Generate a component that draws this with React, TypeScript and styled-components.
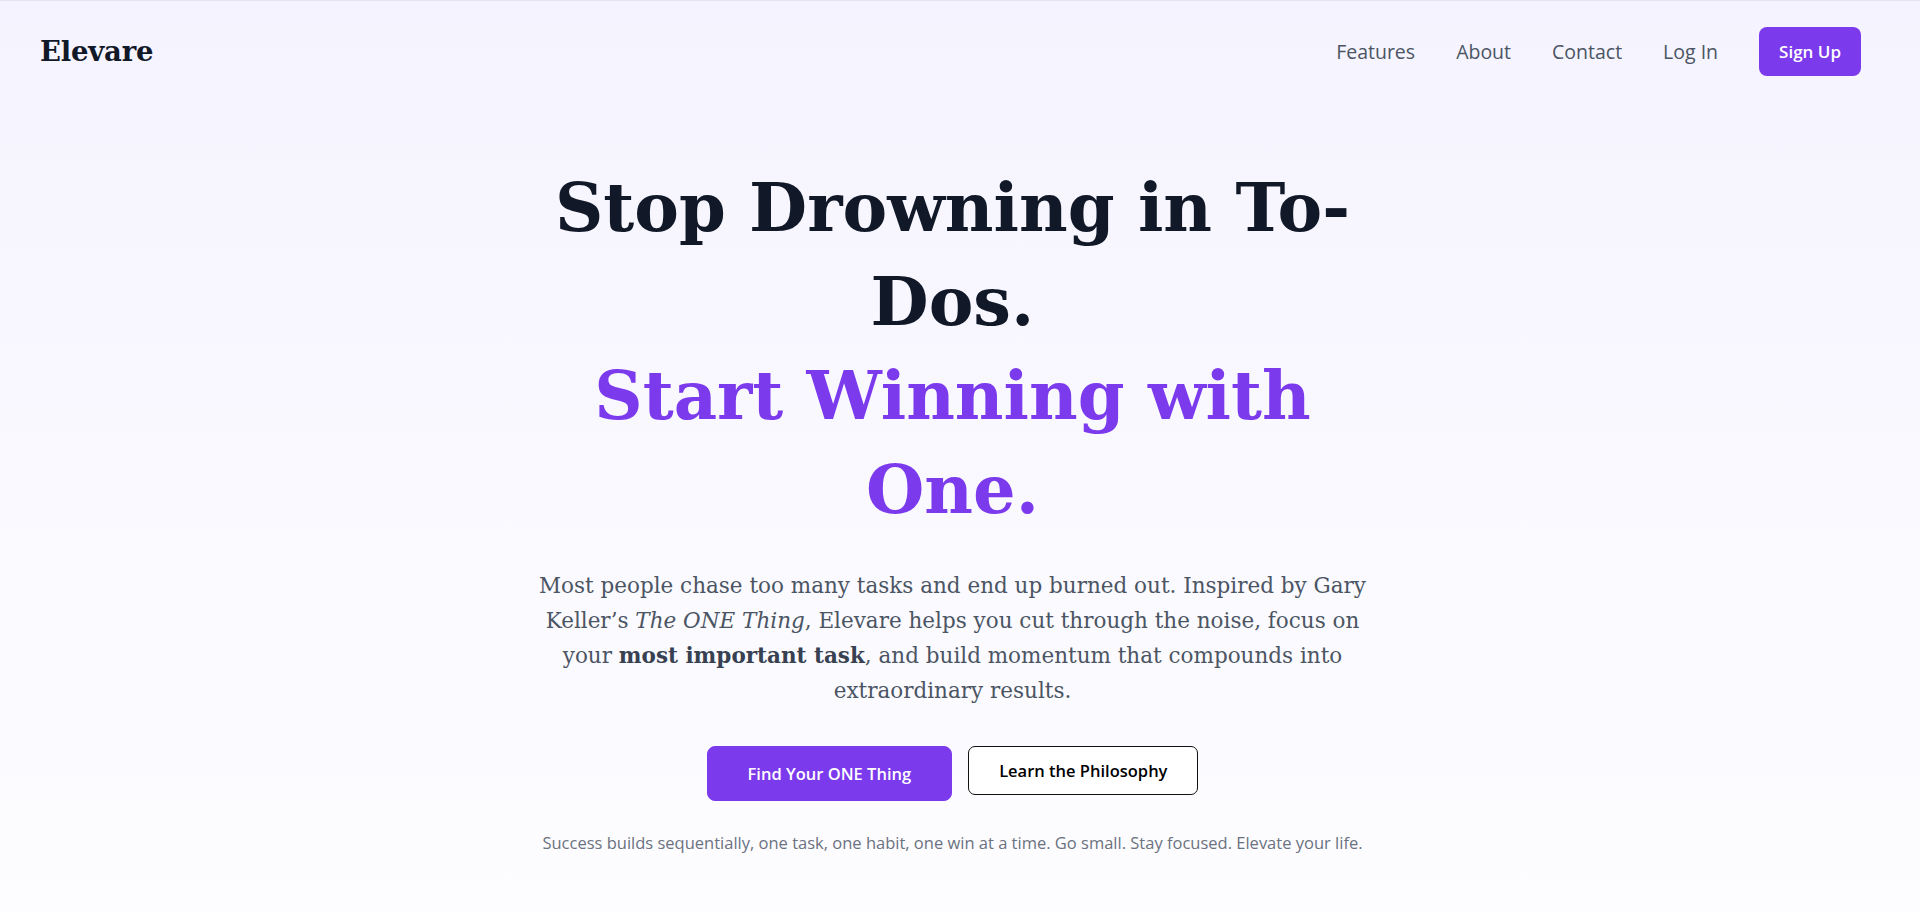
import React from "react";
import styled, { createGlobalStyle } from "styled-components";

const GlobalStyle = createGlobalStyle`
  html, body {
    margin: 0;
    padding: 0;
  }
  body {
    background: #ffffff;
    font-family: "Open Sans", "Noto Sans", sans-serif;
    color: #111827;
  }
  *, *::before, *::after {
    box-sizing: border-box;
  }
`;

/* padding-right reserves the 15px gutter the reference's scrollbar occupies */
const Page = styled.div`
  padding-right: 15px;
  border-top: 1px solid #e8e2f0;
  background: linear-gradient(to bottom, #f5f3ff 0px, #f7f6ff 200px, #ffffff 1150px, #ffffff 100%);
`;

const Header = styled.header`
  display: flex;
  align-items: center;
  justify-content: space-between;
  height: 100px;
  padding: 0 44px 0 40px;
`;

const Logo = styled.a`
  font-family: "DejaVu Serif", Georgia, serif;
  font-weight: 700;
  font-size: 27.5px;
  color: #111827;
  text-decoration: none;
  letter-spacing: -0.2px;
`;

const Nav = styled.nav`
  display: flex;
  align-items: center;
  gap: 41px;
`;

const NavLink = styled.a`
  font-size: 19.5px;
  color: #4b5563;
  text-decoration: none;
`;

const SignUp = styled.a`
  display: inline-flex;
  align-items: center;
  justify-content: center;
  height: 49px;
  padding: 0 20px;
  border-radius: 8px;
  background: #7c3aed;
  color: #ffffff;
  font-size: 17px;
  font-weight: 600;
  text-decoration: none;
`;

const Hero = styled.section`
  display: flex;
  flex-direction: column;
  align-items: center;
  padding: 60px 24px 0;
  text-align: center;
`;

const Title = styled.h1`
  margin: 0;
  max-width: 860px;
  font-family: "DejaVu Serif", Georgia, serif;
  font-weight: 700;
  font-size: 67px;
  line-height: 94px;
  color: #111827;
`;

const Accent = styled.span`
  display: block;
  color: #7c3aed;
`;

const Lead = styled.p`
  margin: 31px 0 0;
  max-width: 850px;
  font-family: "DejaVu Serif", Georgia, serif;
  font-size: 21.5px;
  line-height: 35px;
  color: #4b5563;

  em {
    font-style: italic;
  }
  strong {
    font-weight: 700;
    color: #374151;
  }
`;

const Actions = styled.div`
  display: flex;
  align-items: flex-start;
  gap: 16px;
  margin-top: 38px;
`;

const Button = styled.a<{ $primary?: boolean }>`
  display: inline-flex;
  align-items: center;
  justify-content: center;
  height: ${(p) => (p.$primary ? "55px" : "49px")};
  padding: 0 ${(p) => (p.$primary ? "40px" : "30px")};
  border-radius: ${(p) => (p.$primary ? "8px" : "7px")};
  border: 1px solid ${(p) => (p.$primary ? "#7c3aed" : "#111111")};
  background: ${(p) => (p.$primary ? "#7c3aed" : "#ffffff")};
  color: ${(p) => (p.$primary ? "#ffffff" : "#000000")};
  font-size: 16.5px;
  font-weight: 600;
  text-decoration: none;
`;

const Note = styled.p`
  margin: 28px 0 0;
  font-size: 16.5px;
  line-height: 28px;
  color: #6b7280;
`;

const Section = styled.section`
  min-height: 1400px;
  padding: 120px 40px;
  text-align: center;
`;

const SectionTitle = styled.h2`
  margin: 0;
  font-family: "DejaVu Serif", Georgia, serif;
  font-size: 44px;
  color: #111827;
`;

export default function App() {
  return (
    <>
      <GlobalStyle />
      <Page>
        <Header>
          <Logo href="#">Elevare</Logo>
          <Nav>
            <NavLink href="#features">Features</NavLink>
            <NavLink href="#about">About</NavLink>
            <NavLink href="#contact">Contact</NavLink>
            <NavLink href="#login">Log In</NavLink>
            <SignUp href="#signup">Sign Up</SignUp>
          </Nav>
        </Header>
        <Hero>
          <Title>
            Stop Drowning in To-Dos.
            <Accent>Start Winning with One.</Accent>
          </Title>
          <Lead>
            Most people chase too many tasks and end up burned out. Inspired by Gary
            Keller’s <em>The ONE Thing</em>, Elevare helps you cut through the noise, focus
            on your <strong>most important task</strong>, and build momentum that compounds
            into extraordinary results.
          </Lead>
          <Actions>
            <Button $primary href="#start">Find Your ONE Thing</Button>
            <Button href="#philosophy">Learn the Philosophy</Button>
          </Actions>
          <Note>
            Success builds sequentially, one task, one habit, one win at a time. Go small. Stay
            focused. Elevate your life.
          </Note>
        </Hero>
        <Section id="features">
          <SectionTitle>Features</SectionTitle>
        </Section>
        <Section id="about">
          <SectionTitle>About</SectionTitle>
        </Section>
        <Section id="contact">
          <SectionTitle>Contact</SectionTitle>
        </Section>
      </Page>
    </>
  );
}
